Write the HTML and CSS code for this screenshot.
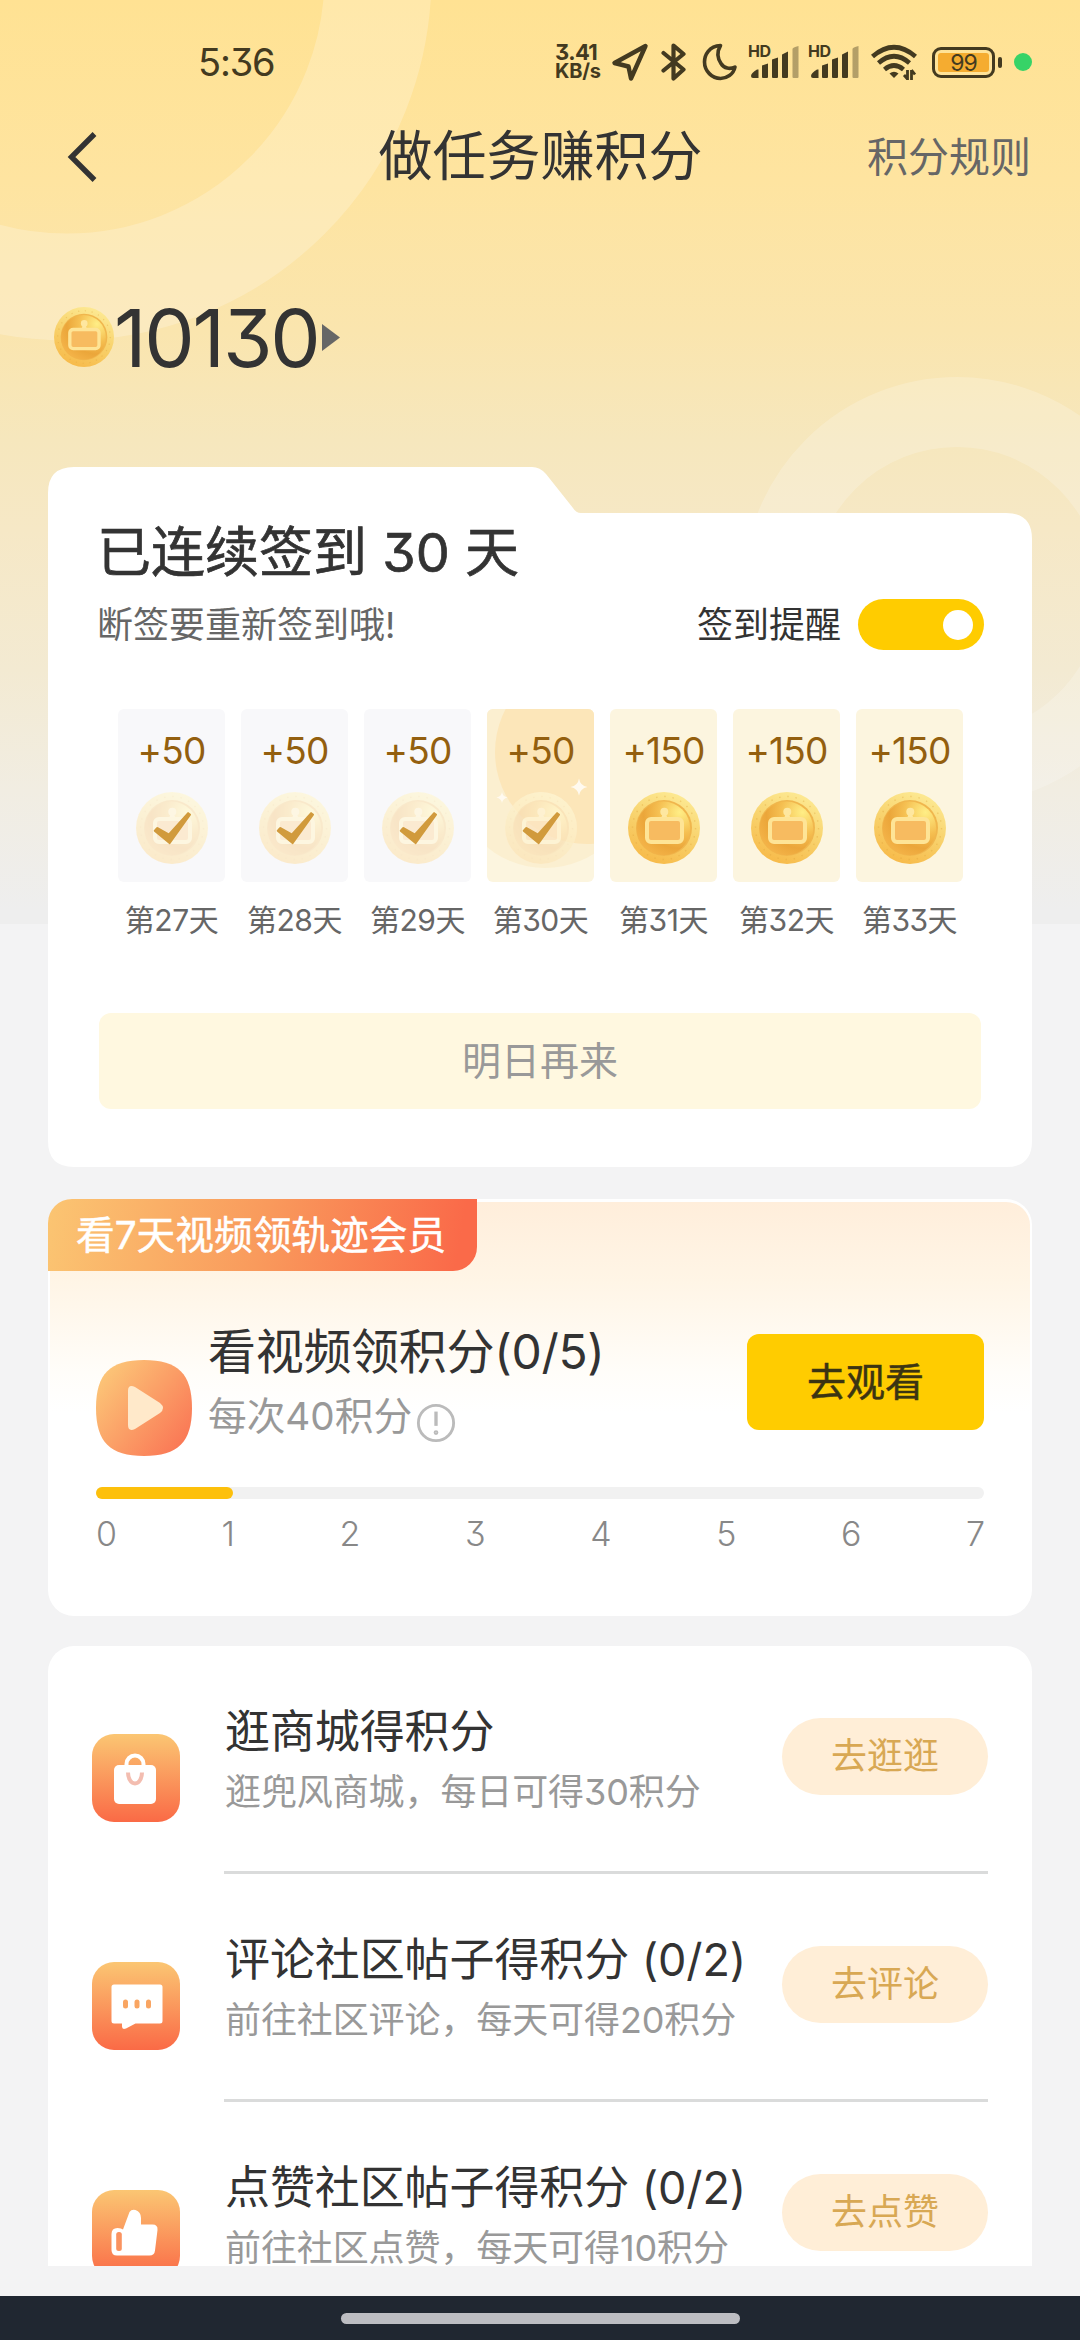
FILE: index.html
```html
<!DOCTYPE html>
<html lang="zh-CN">
<head>
<meta charset="utf-8">
<title>做任务赚积分</title>
<link rel="stylesheet" href="styles.css">
</head>
<body>
<svg class="defs" width="0" height="0" aria-hidden="true">
  <defs>
    <linearGradient id="rim" x1="0.7" y1="0" x2="0.3" y2="1">
      <stop offset="0" stop-color="#fdea94"/><stop offset="0.5" stop-color="#f8d26c"/><stop offset="1" stop-color="#f7b948"/>
    </linearGradient>
    <radialGradient id="face" cx="0.8" cy="0.2" r="0.9">
      <stop offset="0" stop-color="#ffee86"/><stop offset="0.45" stop-color="#f5bf51"/><stop offset="0.75" stop-color="#eba63a"/><stop offset="1" stop-color="#f3b247"/>
    </radialGradient>
    <linearGradient id="tile" x1="0" y1="0" x2="0" y2="1">
      <stop offset="0" stop-color="#fbc673"/><stop offset="1" stop-color="#fa6a46"/>
    </linearGradient>
    <linearGradient id="tileDiag" x1="0" y1="0.1" x2="1" y2="0.9">
      <stop offset="0" stop-color="#fccb7a"/><stop offset="1" stop-color="#fa7253"/>
    </linearGradient>
    <symbol id="coin" viewBox="0 0 72 72">
      <circle cx="36" cy="36" r="36" fill="url(#rim)"/>
      <circle cx="36" cy="36" r="31.5" fill="none" stroke="#dfa63c" stroke-opacity="0.4" stroke-width="1.4" stroke-dasharray="1.4 6.85"/>
      <circle cx="36" cy="36" r="28" fill="#f0b64d"/>
      <circle cx="35.4" cy="36.4" r="26.8" fill="url(#face)"/>
      <circle cx="36.3" cy="19.7" r="4" fill="#fee7a0"/>
      <path d="M34.6 22h3.4l1.4 4h-6.2z" fill="#fee7a0"/>
      <rect x="19" y="27" width="35" height="23" rx="4" fill="#f7bb60" stroke="#fee496" stroke-width="4"/>
    </symbol>
    <symbol id="check" viewBox="0 0 72 72">
      <path d="M17.7 38.6l2.6-3.2q.8-.6 1.7-.1l10.7 5.9L51.4 20.4q.7-.6 1.4 0l2 1.6q.5.5 0 1.300L34.200 51.900q-.5.500-1 0L18 39.500z" fill="#d19a3c"/>
    </symbol>
    <symbol id="claimed" viewBox="0 0 72 72">
      <circle cx="36" cy="36" r="36" fill="#fff" opacity="0.6"/>
      <use href="#coin" width="72" height="72" opacity="0.28"/>
      <use href="#check" width="72" height="72"/>
    </symbol>
  </defs>
</svg>

<div class="screen">
  <svg class="rings" width="1080" height="924" viewBox="0 0 1080 924" fill="none" stroke="#fff">
    <circle cx="67" cy="-24" r="311" stroke-width="107" stroke-opacity="0.22"/>
    <circle cx="957" cy="591" r="179" stroke-width="70" stroke-opacity="0.2"/>
  </svg>

  <div class="status">
    <span class="clock">5:36</span>
    <div class="indicators">
      <span class="speed"><b>3.41</b><b class="unit">KB/s</b></span>
      <svg class="i-nav" width="38" height="40" viewBox="0 0 38 40"><path d="M34.500 4L3.500 21l14 3.500L20 36.500z" fill="none" stroke="#433a20" stroke-width="4.400" stroke-linejoin="round"/></svg>
      <svg class="i-bt" width="26" height="40" viewBox="0 0 26 40"><path d="M2.500 11L22.500 27.500 12.500 36.500V3.500L22.500 12 2.500 28.500" fill="none" stroke="#433a20" stroke-width="4.200" stroke-linejoin="round" stroke-linecap="round"/></svg>
      <svg class="i-moon" width="36" height="38" viewBox="0 0 36 38"><path d="M18.500 2.500C7 3 2.500 12 2.500 19c0 9 7.500 16.500 16 16.500 6 0 13-4 14.500-11.500-5 2.500-11 1.500-14-3.500-4-6-4-12-.5-18z" fill="none" stroke="#433a20" stroke-width="3.600" stroke-linejoin="round"/></svg>
      <span class="signal"><i>HD</i><svg width="50" height="32" viewBox="0 0 50 32" fill="#433a20"><path d="M0 30q0-3 6-6.500h1.500V32H2q-2 0-2-2zM11 19.500l6-2V31q0 1-1 1h-4q-1 0-1-1zM21 13.500l6-2V31q0 1-1 1h-4q-1 0-1-1zM31 8.500l6-3V31q0 1-1 1h-4q-1 0-1-1z"/><path d="M41.500 3q0-1.500 6-3V31q0 1-1 1h-4q-1 0-1-1z" opacity=".4"/></svg></span>
      <span class="signal"><i>HD</i><svg width="50" height="32" viewBox="0 0 50 32" fill="#433a20"><path d="M0 30q0-3 6-6.500h1.500V32H2q-2 0-2-2zM11 19.500l6-2V31q0 1-1 1h-4q-1 0-1-1zM21 13.500l6-2V31q0 1-1 1h-4q-1 0-1-1zM31 8.500l6-3V31q0 1-1 1h-4q-1 0-1-1z"/><path d="M41.500 3q0-1.500 6-3V31q0 1-1 1h-4q-1 0-1-1z" opacity=".4"/></svg></span>
      <svg class="i-wifi" width="46" height="36" viewBox="0 0 46 36"><g fill="none" stroke="#433a20" stroke-width="4.600"><path d="M1.500 12.500Q23-6 44.500 12.500"/><path d="M7.500 19Q23 5.500 38.500 19"/><path d="M13.500 25.500Q23 17.500 32.500 25.500"/></g><path d="M18.500 29.500Q23 26 27.500 29.500L23 34z" fill="#433a20"/><path d="M36.500 26v10M33 31l3.500 4M40.500 36V26m0 0l3.500 4.500" fill="none" stroke="#433a20" stroke-width="2.800"/></svg>
      <span class="battery"><span class="cell">99</span></span>
      <span class="mic"></span>
    </div>
  </div>

  <header class="bar">
    <svg class="back" width="34" height="54" viewBox="0 0 34 54"><path d="M28.500 4L5.500 27l23 23" fill="none" stroke="#333" stroke-width="5.400"/></svg>
    <h1>做任务赚积分</h1>
    <a class="rules">积分规则</a>
  </header>

  <div class="balance">
    <svg width="60" height="60"><use href="#coin"/></svg>
    <span class="total">10130</span>
    <svg class="arrow" width="18" height="27" viewBox="0 0 18 27"><path d="M0 0l18 13.500L0 27z" fill="#666"/></svg>
  </div>

  <main class="content">
    <section class="checkin">
      <h2>已连续签到 <span>30</span> 天</h2>
      <div class="remind">
        <p>断签要重新签到哦!</p>
        <span class="remind-label">签到提醒</span>
        <span class="toggle"></span>
      </div>
      <div class="days">
        <div class="day"><div class="chip done"><b>+50</b><svg width="72" height="72"><use href="#claimed"/></svg></div><span>第27天</span></div>
        <div class="day"><div class="chip done"><b>+50</b><svg width="72" height="72"><use href="#claimed"/></svg></div><span>第28天</span></div>
        <div class="day"><div class="chip done"><b>+50</b><svg width="72" height="72"><use href="#claimed"/></svg></div><span>第29天</span></div>
        <div class="day"><div class="chip today">
          <svg class="glow" width="107" height="173" viewBox="0 0 107 173"><circle cx="58" cy="68" r="91" fill="#fbefd0"/><circle cx="100" cy="43" r="92" fill="#fce6b9"/><path d="M92 69.500q1 7 8.500 8.500-7.500 1.500-8.500 8.500-1-7-8.500-8.500 7.500-1.500 8.500-8.500zM15 83q.7 4.500 5.500 5.500-4.800 1-5.500 5.500-.7-4.500-5.500-5.500 4.800-1 5.500-5.500z" fill="#fffaf0"/></svg>
          <b>+50</b><svg width="72" height="72"><use href="#claimed"/></svg></div><span>第30天</span></div>
        <div class="day"><div class="chip"><b>+150</b><svg width="72" height="72"><use href="#coin"/></svg></div><span>第31天</span></div>
        <div class="day"><div class="chip"><b>+150</b><svg width="72" height="72"><use href="#coin"/></svg></div><span>第32天</span></div>
        <div class="day"><div class="chip"><b>+150</b><svg width="72" height="72"><use href="#coin"/></svg></div><span>第33天</span></div>
      </div>
      <div class="tomorrow">明日再来</div>
    </section>

    <section class="video">
      <div class="ribbon">看7天视频领轨迹会员</div>
      <div class="video-row">
        <svg class="play" width="96" height="96" viewBox="0 0 96 96"><path d="M48 0C82 0 96 14 96 48S82 96 48 96 0 82 0 48 14 0 48 0z" fill="url(#tileDiag)"/><path d="M32 31q0-7 7-4l25 16q6 5 0 10L39 69q-7 3-7-4z" fill="#ffe9ca"/></svg>
        <div class="video-text">
          <h3>看视频领积分(0/5)</h3>
          <p>每次40积分<svg class="info" width="40" height="40" viewBox="0 0 42 42" fill="none" stroke="#bbb"><circle cx="21" cy="21" r="18.500" stroke-width="3"/><path d="M21 9v15" stroke-width="3.500"/><circle cx="21" cy="31" r="1.500" stroke-width="2"/></svg></p>
        </div>
        <button class="watch">去观看</button>
      </div>
      <div class="track"><div class="fill"></div></div>
      <div class="ticks"><span>0</span><span>1</span><span>2</span><span>3</span><span>4</span><span>5</span><span>6</span><span>7</span></div>
    </section>

    <section class="tasks">
      <article class="task">
        <svg class="tile" width="88" height="88" viewBox="0 0 88 88"><rect width="88" height="88" rx="22" fill="url(#tile)"/><rect x="22" y="31" width="42" height="39" rx="5" fill="#fff"/><path d="M34.500 33v-3a8.500 8.500 0 0 1 17 0v3" fill="none" stroke="#fff" stroke-width="4"/><path d="M36 38.500c0 5 2.500 11 7 11s7-6 7-11" fill="none" stroke="#f3bdb0" stroke-width="4"/></svg>
        <div class="task-text"><h3>逛商城得积分</h3><p>逛兜风商城，每日可得30积分</p></div>
        <button class="go">去逛逛</button>
      </article>
      <article class="task">
        <svg class="tile" width="88" height="88" viewBox="0 0 88 88"><rect width="88" height="88" rx="22" fill="url(#tile)"/><path d="M22 22.500h46q2.500 0 2.500 2.500v34q0 2.500-2.500 2.500H43.500L34 66.500q-4 1.500-4-2v-3h-8q-2.500 0-2.500-2.500V25q0-2.500 2.500-2.500z" fill="#fff"/><g fill="#f9a562"><rect x="31" y="37.500" width="5" height="9" rx="2.500"/><rect x="42.500" y="37.500" width="5" height="9" rx="2.500"/><rect x="54" y="37.500" width="5" height="9" rx="2.500"/></g></svg>
        <div class="task-text"><h3>评论社区帖子得积分 (0/2)</h3><p>前往社区评论，每天可得20积分</p></div>
        <button class="go">去评论</button>
      </article>
      <article class="task">
        <svg class="tile" width="88" height="88" viewBox="0 0 88 88"><rect width="88" height="88" rx="22" fill="url(#tile)"/><path d="M31 39.500L37.500 22q2-3 6-2 5.500 2 5.500 8v6.500h11.500q5.500 0 5 5.500l-2.500 20.500q-.5 5-5.500 5H25q-5.500 0-5.500-5.500V44q0-6 6-6 4 0 5.500 1.500z" fill="#fff"/><rect x="24.200" y="42" width="5.600" height="19" rx="2.500" fill="#fa9360"/></svg>
        <div class="task-text"><h3>点赞社区帖子得积分 (0/2)</h3><p>前往社区点赞，每天可得10积分</p></div>
        <button class="go">去点赞</button>
      </article>
    </section>
  </main>

  <footer class="navbar"><span></span></footer>
</div>
</body>
</html>
```
FILE: styles.css
```css
* { box-sizing: border-box; }

body {
  margin: 0;
  background: #f3f3f3;
  font-family: Inter, "Noto Sans CJK SC", sans-serif;
  font-feature-settings: "cv09";
  color: #333;
}

h1, h2, h3, p { margin: 0; font-weight: 400; }
b, i { font-weight: 400; font-style: normal; }
svg { display: block; flex: none; }
button { border: 0; padding: 0; font: inherit; font-feature-settings: inherit; }

.defs { position: absolute; }

.screen {
  position: relative;
  display: flex;
  flex-direction: column;
  width: 1080px;
  height: 2340px;
  overflow: hidden;
  background:
    linear-gradient(#ffe293 0, #fee4a0 180px, #fae5ae 330px, #f6e7bd 440px, #f6e8c6 530px, #f3ead2 670px, #f1ede2 790px, #eeeeee 910px)
    0 0 / 1080px 924px no-repeat #f3f3f4;
}

.rings { position: absolute; left: 0; top: 0; }

/* status bar */
.status {
  position: relative;
  display: flex;
  justify-content: space-between;
  align-items: center;
  height: 124px;
  padding: 0 48px 0 198px;
  color: #433a20;
}
.clock { font-size: 38px; line-height: 48px; letter-spacing: -1.2px; }
.indicators { display: flex; align-items: center; }
.speed { display: flex; flex-direction: column; width: 56px; font-size: 22px; line-height: 19px; }
.speed b { font-weight: 700; letter-spacing: -0.6px; }
.speed .unit { font-size: 20px; letter-spacing: -0.2px; }
.i-nav { margin-right: 12px; }
.i-bt { margin-right: 15px; }
.i-moon { margin-right: 10px; }
.signal { position: relative; display: flex; align-items: flex-end; width: 60px; height: 32px; padding-left: 3px; }
.signal i { position: absolute; left: 0; top: -3px; font-size: 16px; font-weight: 700; line-height: 16px; letter-spacing: -0.5px; }
.i-wifi { margin: 0 15px 0 3px; }
.battery {
  position: relative;
  width: 63px;
  height: 31px;
  padding: 3px;
  border: 3px solid #433a20;
  border-radius: 9px;
}
.battery::after {
  content: "";
  position: absolute;
  right: -10px;
  top: 7px;
  width: 4px;
  height: 11px;
  border-radius: 2px;
  background: #433a20;
}
.cell { display: block; height: 19px; border-radius: 3px; background: #f5ac30; font-size: 23px; line-height: 20px; text-align: center; letter-spacing: -1px; }
.mic { width: 18px; height: 18px; margin-left: 19px; border-radius: 50%; background: #37d367; }

/* title bar */
.bar {
  position: relative;
  display: grid;
  grid-template-columns: 1fr auto 1fr;
  align-items: center;
  height: 64px;
  padding: 0 49px 0 66px;
}
.bar h1 { padding-top: 1px; margin-right: 16px; font-size: 54px; line-height: 64px; }
.rules { justify-self: end; font-size: 41px; line-height: 62px; color: #666; }

/* balance */
.balance { position: relative; display: flex; align-items: center; height: 100px; margin-top: 99px; padding: 0 54px; }
.total { padding-top: 2px; font-size: 80px; line-height: 98px; letter-spacing: -2.2px; }
.arrow { margin-left: 3px; }

/* cards */
.content {
  position: relative;
  display: flex;
  flex-direction: column;
  height: 1799px;
  margin: 80px 48px 0;
  overflow: hidden;
}
.checkin {
  flex: none;
  height: 700px;
  padding: 54px 48px 0 49px;
  background: #fff;
  clip-path: path("M0 26Q0 0 26 0H484Q492 0 498 7L525 41Q528 46 533 46H958Q984 46 984 72V674Q984 700 958 700H26Q0 700 0 674Z");
}
.checkin h2 { font-size: 54px; line-height: 64px; -webkit-text-stroke: 0.7px #333; }
.remind { display: flex; align-items: center; height: 51px; margin-top: 14px; font-size: 36px; line-height: 51px; }
.remind p { flex: 1; padding-top: 1px; color: #666; }
.remind-label { padding-top: 1px; }
.toggle { display: flex; align-items: center; justify-content: flex-end; width: 126px; height: 51px; margin-left: 17px; padding-right: 11px; border-radius: 26px; background: #ffcc00; }
.toggle::before { content: ""; width: 30px; height: 30px; border-radius: 50%; background: #fff; }

.days { display: flex; gap: 16px; margin: 59px 0 0 21px; }
.day { display: flex; flex-direction: column; width: 107px; align-items: center; }
.day > span { margin-top: 18px; font-size: 30px; line-height: 40px; letter-spacing: -0.5px; color: #666; white-space: nowrap; }
.chip { position: relative; display: flex; flex-direction: column; align-items: center; width: 107px; height: 173px; padding-top: 18px; border-radius: 6px; overflow: hidden; background: #fcf5df; }
.chip b { position: relative; font-size: 37px; line-height: 48px; color: #935f0f; letter-spacing: -0.8px; }
.chip svg { position: relative; margin-top: 17px; }
.chip .glow { position: absolute; left: 0; top: 0; margin: 0; }
.done { background: #f8f8fa; }

.tomorrow { height: 96px; margin: 73px 3px 0 2px; border-radius: 12px; background: #fff8e0; font-size: 39px; line-height: 96px; text-align: center; color: #999; }

.video {
  flex: none;
  height: 417px;
  margin-top: 32px;
  border: solid #fff;
  border-width: 3px 2px;
  border-radius: 26px;
  background: linear-gradient(#ffeedb, #fff5e6 80px, #fffdf9 170px, #fff 210px);
}
.ribbon {
  width: 429px;
  height: 72px;
  margin: -3px 0 0 -2px;
  padding: 1px 0 0 28px;
  border-radius: 24px 0 24px 0;
  background: linear-gradient(100deg, #fbc572, #f99a5c 50%, #fa6a49 95%);
  font-size: 38.7px;
  line-height: 71px;
  color: #fff;
  -webkit-text-stroke: 0.5px #fff;
  white-space: nowrap;
}
.video-row { display: flex; margin: 49px 46px 0; }
.play { margin-top: 40px; }
.video-text { flex: 1; padding: 1px 0 0 16px; }
.video-text h3 { font-size: 48px; line-height: 62px; letter-spacing: -0.3px; }
.video-text p { display: flex; height: 65px; font-size: 38.7px; line-height: 66px; color: #999; }
.info { margin: 20px 0 0 4px; }
.watch { width: 237px; height: 96px; margin-top: 14px; border-radius: 12px; background: #ffcc00; font-size: 39px; line-height: 96px; color: #3b3412; -webkit-text-stroke: 0.5px #3b3412; }
.track { height: 12px; margin: 31px 46px 0; border-radius: 6px; background: #f1f1f1; }
.fill { width: 137px; height: 12px; border-radius: 6px; background: #fdc00b; }
.ticks { display: flex; justify-content: space-between; margin: 11px 45px 0 46px; font-size: 34px; font-weight: 300; line-height: 48px; color: #888; }

.tasks { flex: none; margin-top: 30px; border-radius: 26px 26px 0 0; background: #fff; }
.task { display: flex; height: 228px; padding: 0 44px; }
.tile { margin-top: 88px; }
.task-text { position: relative; flex: 1; margin-left: 44px; padding-top: 57px; white-space: nowrap; }
.task-text::after { content: ""; position: absolute; left: 0; bottom: 0; width: 764px; height: 3px; background: #dadbdb; }
.task-text h3 { padding-left: 1px; font-size: 45px; line-height: 58px; letter-spacing: -0.1px; }
.task-text p { margin-top: 6px; padding-left: 1px; font-size: 36px; line-height: 50px; letter-spacing: -0.1px; color: #999; }
.go { flex: none; width: 206px; height: 77px; margin-top: 72px; border-radius: 39px; background: #ffeed7; font-size: 36px; line-height: 77px; color: #d8a854; }

.navbar { position: relative; display: flex; justify-content: center; height: 44px; margin-top: auto; padding-top: 17px; background: #202731; }
.navbar span { width: 399px; height: 11px; border-radius: 6px; background: #bcbdc2; }
```
